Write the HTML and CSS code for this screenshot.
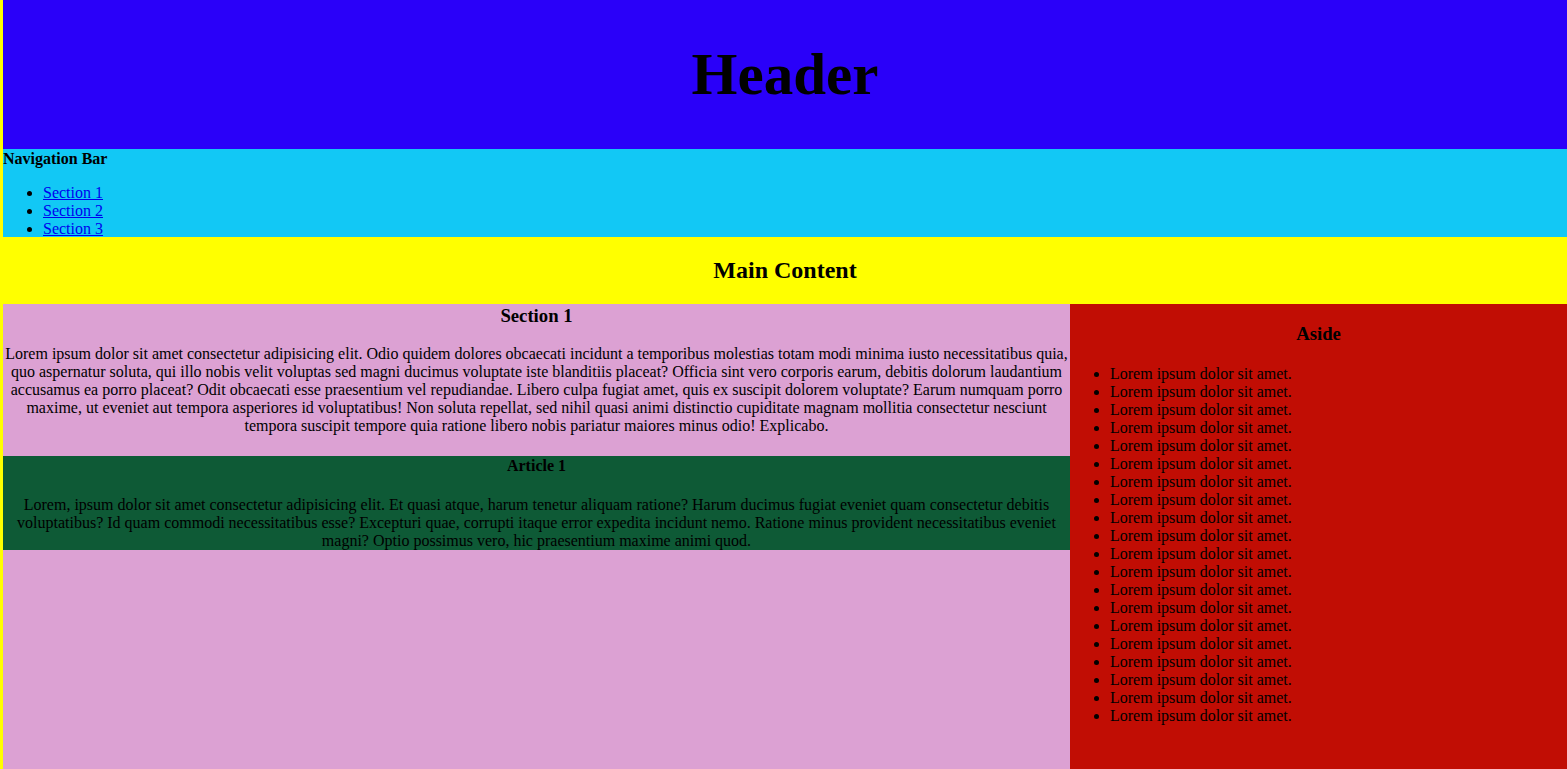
FILE: index.html
```html
<!DOCTYPE html>
<html>
<head>
<meta charset="utf-8">
<title>Layout</title>
<link rel="stylesheet" href="styles.css">
</head>
<body>
<div class="page">
  <header class="header"><h1>Header</h1></header>
  <nav class="nav">
    <div class="nav-title">Navigation Bar</div>
    <ul>
      <li><a href="#s1">Section 1</a></li>
      <li><a href="#s2">Section 2</a></li>
      <li><a href="#s3">Section 3</a></li>
    </ul>
  </nav>
  <main class="main">
    <h2>Main Content</h2>
    <div class="row">
      <section class="section">
        <h3>Section 1</h3>
        <p>Lorem ipsum dolor sit amet consectetur adipisicing elit. Odio quidem dolores obcaecati incidunt a temporibus molestias totam modi minima iusto necessitatibus quia, quo aspernatur soluta, qui illo nobis velit voluptas sed magni ducimus voluptate iste blanditiis placeat? Officia sint vero corporis earum, debitis dolorum laudantium accusamus ea porro placeat? Odit obcaecati esse praesentium vel repudiandae. Libero culpa fugiat amet, quis ex suscipit dolorem voluptate? Earum numquam porro maxime, ut eveniet aut tempora asperiores id voluptatibus! Non soluta repellat, sed nihil quasi animi distinctio cupiditate magnam mollitia consectetur nesciunt tempora suscipit tempore quia ratione libero nobis pariatur maiores minus odio! Explicabo.</p>
        <article class="article">
          <h4>Article 1</h4>
          <p>Lorem, ipsum dolor sit amet consectetur adipisicing elit. Et quasi atque, harum tenetur aliquam ratione? Harum ducimus fugiat eveniet quam consectetur debitis voluptatibus? Id quam commodi necessitatibus esse? Excepturi quae, corrupti itaque error expedita incidunt nemo. Ratione minus provident necessitatibus eveniet magni? Optio possimus vero, hic praesentium maxime animi quod.</p>
        </article>
      </section>
      <aside class="aside">
        <h3>Aside</h3>
        <ul>
          <li>Lorem ipsum dolor sit amet.</li>
          <li>Lorem ipsum dolor sit amet.</li>
          <li>Lorem ipsum dolor sit amet.</li>
          <li>Lorem ipsum dolor sit amet.</li>
          <li>Lorem ipsum dolor sit amet.</li>
          <li>Lorem ipsum dolor sit amet.</li>
          <li>Lorem ipsum dolor sit amet.</li>
          <li>Lorem ipsum dolor sit amet.</li>
          <li>Lorem ipsum dolor sit amet.</li>
          <li>Lorem ipsum dolor sit amet.</li>
          <li>Lorem ipsum dolor sit amet.</li>
          <li>Lorem ipsum dolor sit amet.</li>
          <li>Lorem ipsum dolor sit amet.</li>
          <li>Lorem ipsum dolor sit amet.</li>
          <li>Lorem ipsum dolor sit amet.</li>
          <li>Lorem ipsum dolor sit amet.</li>
          <li>Lorem ipsum dolor sit amet.</li>
          <li>Lorem ipsum dolor sit amet.</li>
          <li>Lorem ipsum dolor sit amet.</li>
          <li>Lorem ipsum dolor sit amet.</li>
        </ul>
      </aside>
    </div>
  </main>
</div>
</body>
</html>
```

FILE: styles.css
```css
html, body {
  margin: 0;
  padding: 0;
}
body {
  background: #ffff00;
  font-family: "Liberation Serif", "Times New Roman", serif;
  font-size: 16px;
  color: #000;
}
.page {
  padding-left: 3px;
  min-height: 100vh;
  display: flex;
  flex-direction: column;
}
.header {
  background: #2a00f9;
  height: 149px;
  display: flex;
  align-items: center;
  justify-content: center;
}
.header h1 {
  margin: 0;
  font-size: 59px;
  font-weight: bold;
}
.nav {
  background: #12c8f5;
  height: 88px;
  box-sizing: border-box;
  padding-top: 1px;
}
.nav-title {
  font-weight: bold;
}
.nav ul {
  margin: 16px 0 0;
  padding-left: 40px;
}
.nav a {
  color: #0000ee;
}
.main {
  flex: 1;
  display: flex;
  flex-direction: column;
}
.main h2 {
  margin: 0;
  height: 67px;
  display: flex;
  align-items: center;
  justify-content: center;
  font-size: 24px;
}
.row {
  flex: 1;
  display: flex;
  min-height: 465px;
}
.section {
  width: 1067px;
  background: #dca1d3;
  text-align: center;
}
.section h3 {
  margin: 0 0 18px;
  font-size: 18.72px;
  padding-top: 1px;
}
.section > p {
  margin: 0 0 21px;
}
.article {
  background: #0e5a36;
  padding-top: 1px;
}
.article h4 {
  margin: 0 0 21px;
  font-size: 16px;
}
.article p {
  margin: 0;
}
.aside {
  flex: 1;
  background: #c10d04;
}
.aside h3 {
  margin: 19px 0 20px;
  text-align: center;
  font-size: 18.72px;
}
.aside ul {
  margin: 0;
  padding-left: 40px;
}
```
